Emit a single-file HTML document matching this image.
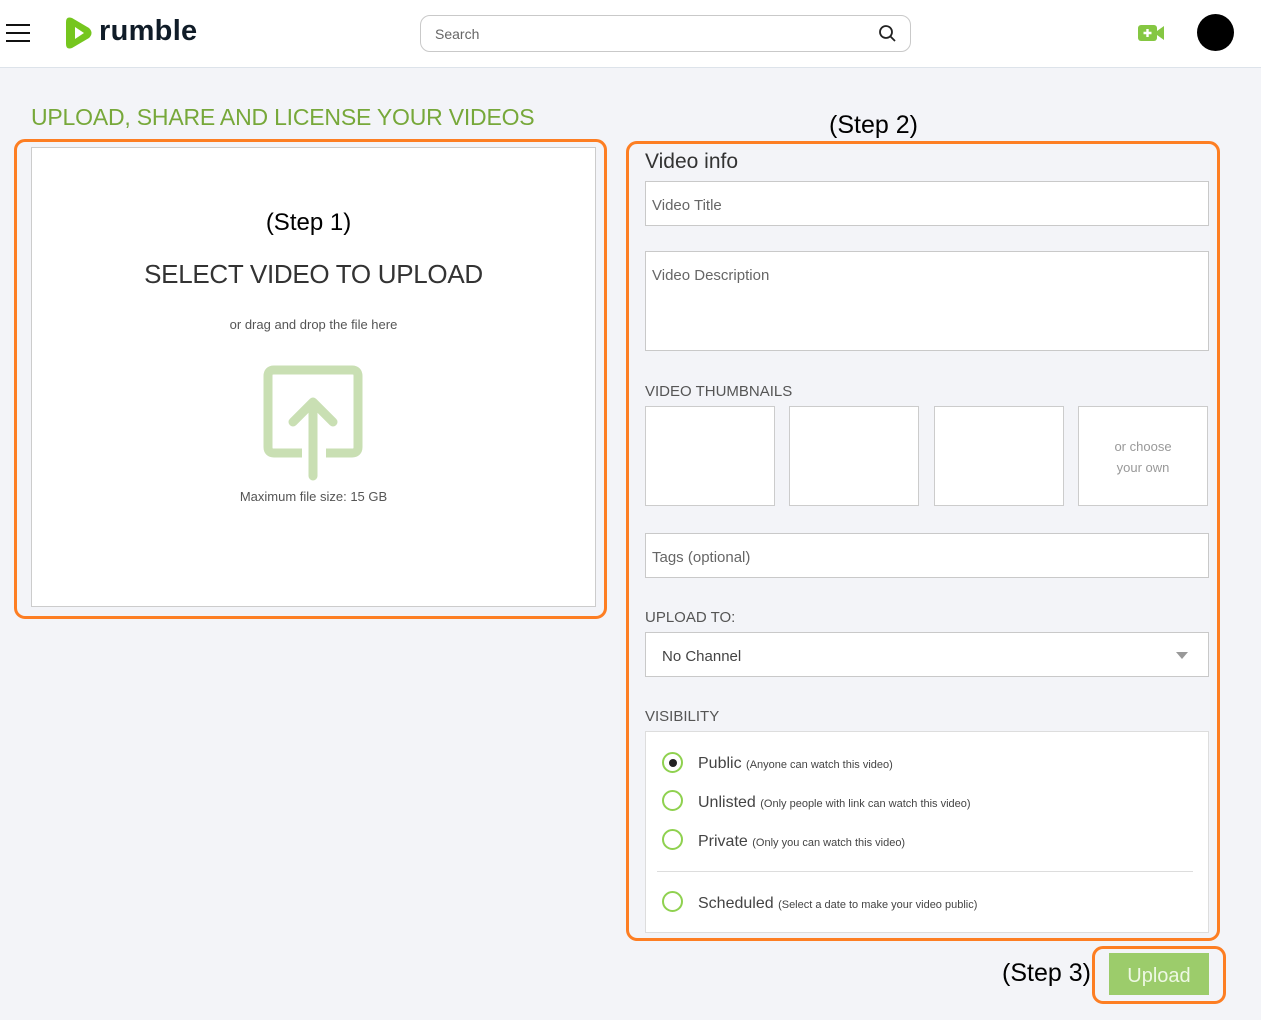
<!DOCTYPE html>
<html><head><meta charset="utf-8"><style>
*{box-sizing:border-box;margin:0;padding:0}
body{width:1261px;height:1020px;background:#f3f4f8;font-family:"Liberation Sans",sans-serif;position:relative;overflow:hidden;color:#444}
.a{position:absolute}
.hdr{left:0;top:0;width:1261px;height:68px;background:#fff;border-bottom:1px solid #dde3ea}
.inp{background:#fff;border:1px solid #c9c9c9;color:#666;font-size:15px;padding-left:6px}
.ob{border:3px solid #fd7e23;border-radius:11px}
.lbl{font-size:15px;color:#555}
.th{background:#fff;border:1px solid #ccc;top:406px;width:130px;height:100px}
.rad{width:21px;height:21px;border:2px solid #8fd14f;border-radius:50%;left:662px}
.rt{left:698px;font-size:16px;color:#444}
.rt small{font-size:11px;color:#444}
</style></head><body>
<div class="a hdr"></div>
<div class="a" style="left:6px;top:24px;width:24px;height:2px;background:#111"></div>
<div class="a" style="left:6px;top:32px;width:24px;height:2px;background:#111"></div>
<div class="a" style="left:6px;top:40px;width:24px;height:2px;background:#111"></div>
<svg class="a" style="left:63px;top:16px" width="30" height="34" viewBox="0 0 30 34"><path d="M3 6Q3 0 9 2L26 12Q31 17 26 22L9 32Q3 34 3 28Z" fill="#75c61e"/><path d="M12 11L21 17L12 23Z" fill="#fff"/></svg>
<div class="a" style="left:99px;top:15px;font-size:29px;font-weight:bold;color:#101c28;letter-spacing:0.3px">rumble</div>
<div class="a inp" style="left:420px;top:15px;width:491px;height:37px;border-radius:10px;padding:10px 14px;font-size:14px">Search</div>
<svg class="a" style="left:878px;top:24px" width="20" height="20" viewBox="0 0 20 20"><circle cx="8" cy="8" r="6" fill="none" stroke="#222" stroke-width="1.8"/><path d="M12.5 12.5L17 17" stroke="#222" stroke-width="1.8"/></svg>
<svg class="a" style="left:1137px;top:23px" width="30" height="20" viewBox="0 0 30 20"><rect x="1" y="2" width="19" height="16" rx="3" fill="#85c742"/><path d="M20 8L27 3V17L20 12Z" fill="#85c742"/><path d="M10.5 6v8M6.5 10h8" stroke="#fff" stroke-width="2.4"/></svg>
<div class="a" style="left:1197px;top:14px;width:37px;height:37px;border-radius:50%;background:#000"></div>

<div class="a" style="left:31px;top:104px;font-size:23px;color:#77a83a;letter-spacing:-0.2px">UPLOAD, SHARE AND LICENSE YOUR VIDEOS</div>
<div class="a ob" style="left:14px;top:139px;width:593px;height:480px"></div>
<div class="a" style="left:31px;top:147px;width:565px;height:460px;background:#fff;border:1px solid #ccc"></div>
<div class="a" style="left:31px;top:209px;width:555px;text-align:center;font-size:24px;color:#000">(Step 1)</div>
<div class="a" style="left:31px;top:259px;width:565px;text-align:center;font-size:26px;color:#333;letter-spacing:-0.3px">SELECT VIDEO TO UPLOAD</div>
<div class="a" style="left:31px;top:317px;width:565px;text-align:center;font-size:13px;color:#555">or drag and drop the file here</div>
<svg class="a" style="left:262px;top:362px" width="104" height="120" viewBox="0 0 104 120"><path d="M40 91H12Q6 91 6 85V14Q6 8 12 8H90Q96 8 96 14V85Q96 91 90 91H64" fill="none" stroke="#c9dfb3" stroke-width="9"/><path d="M51 114V40M31 60L51 40L71 60" fill="none" stroke="#c9dfb3" stroke-width="9" stroke-linecap="round" stroke-linejoin="round"/></svg>
<div class="a" style="left:31px;top:489px;width:565px;text-align:center;font-size:13px;color:#555">Maximum file size: 15 GB</div>

<div class="a" style="left:829px;top:111px;font-size:25px;color:#000">(Step 2)</div>
<div class="a ob" style="left:626px;top:141px;width:594px;height:800px"></div>
<div class="a" style="left:645px;top:150px;font-size:21px;color:#333">Video info</div>
<div class="a inp" style="left:645px;top:181px;width:564px;height:45px;padding-top:15px">Video Title</div>
<div class="a inp" style="left:645px;top:251px;width:564px;height:100px;padding-top:15px">Video Description</div>
<div class="a lbl" style="left:645px;top:383px">VIDEO THUMBNAILS</div>
<div class="a th" style="left:645px"></div>
<div class="a th" style="left:789px"></div>
<div class="a th" style="left:934px"></div>
<div class="a th" style="left:1078px;text-align:center;font-size:13px;color:#999;padding-top:29px;line-height:21px">or choose<br>your own</div>
<div class="a inp" style="left:645px;top:533px;width:564px;height:45px;padding-top:15px">Tags (optional)</div>
<div class="a lbl" style="left:645px;top:609px">UPLOAD TO:</div>
<div class="a inp" style="left:645px;top:632px;width:564px;height:45px;padding:15px 16px;color:#444">No Channel</div>
<div class="a" style="left:1176px;top:652px;border:6px solid transparent;border-top:7px solid #999;border-bottom:0"></div>
<div class="a lbl" style="left:645px;top:708px">VISIBILITY</div>
<div class="a" style="left:645px;top:731px;width:564px;height:202px;background:#fff;border:1px solid #ddd"></div>
<div class="a rad" style="top:752px"></div><div class="a" style="left:669px;top:759px;width:8px;height:8px;border-radius:50%;background:#222"></div>
<div class="a rt" style="top:755px">Public <small>(Anyone can watch this video)</small></div>
<div class="a rad" style="top:790px"></div>
<div class="a rt" style="top:794px">Unlisted <small>(Only people with link can watch this video)</small></div>
<div class="a rad" style="top:829px"></div>
<div class="a rt" style="top:833px">Private <small>(Only you can watch this video)</small></div>
<div class="a" style="left:657px;top:871px;width:536px;height:1px;background:#ddd"></div>
<div class="a rad" style="top:891px"></div>
<div class="a rt" style="top:895px">Scheduled <small>(Select a date to make your video public)</small></div>

<div class="a" style="left:1002px;top:959px;font-size:25px;color:#000">(Step 3)</div>
<div class="a ob" style="left:1092px;top:946px;width:134px;height:58px"></div>
<div class="a" style="left:1109px;top:953px;width:100px;height:42px;background:#9ccc6b;color:#eef8e4;font-size:20px;text-align:center;line-height:46px">Upload</div>
</body></html>
